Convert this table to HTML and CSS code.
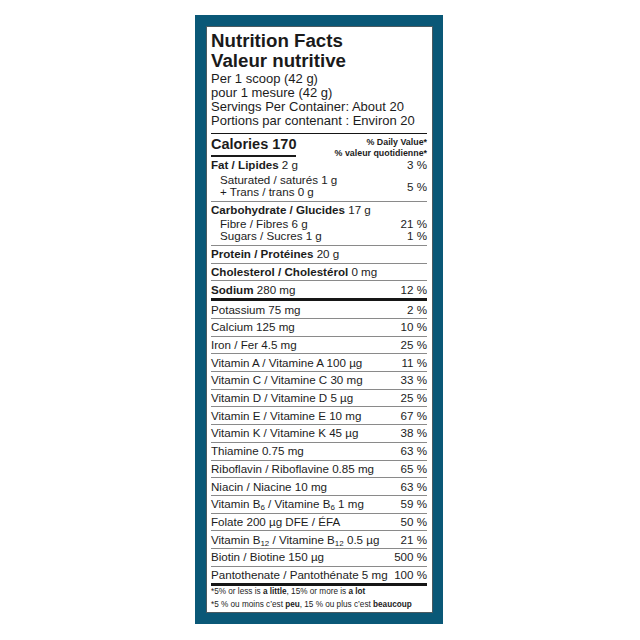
FILE: index.html
```html
<!DOCTYPE html>
<html lang="en">
<head>
<meta charset="utf-8">
<title>Nutrition Facts</title>
<link rel="stylesheet" href="styles.css">
</head>
<body>
<div class="frame">
  <div class="label">
    <h1 class="title">Nutrition Facts<br>Valeur nutritive</h1>
    <div class="serving">
      <div>Per 1 scoop (42 g)</div>
      <div>pour 1 mesure (42 g)</div>
      <div>Servings Per Container: About 20</div>
      <div>Portions par contenant : Environ 20</div>
    </div>

    <div class="cal-row">
      <div class="cal">Calories 170</div>
      <div class="dv">% Daily Value*<br>% valeur quotidienne*</div>
    </div>

    <div class="group group-fat">
      <div class="line"><span><b>Fat / Lipides</b> 2 g</span><span>3 %</span></div>
      <div class="pair">
        <div class="subs">
          <div class="line sub">Saturated / saturés 1 g</div>
          <div class="line sub">+ Trans / trans 0 g</div>
        </div>
        <span class="pct">5 %</span>
      </div>
    </div>

    <div class="group group-carb">
      <div class="line"><span><b>Carbohydrate / Glucides</b> 17 g</span></div>
      <div class="line sub first-sub"><span>Fibre / Fibres 6 g</span><span>21 %</span></div>
      <div class="line sub"><span>Sugars / Sucres 1 g</span><span>1 %</span></div>
    </div>

    <div class="row"><span><b>Protein / Protéines</b> 20 g</span></div>
    <div class="row"><span><b>Cholesterol / Cholestérol</b> 0 mg</span></div>
    <div class="row row-sodium"><span><b>Sodium</b> 280 mg</span><span>12 %</span></div>

    <div class="thick"></div>

    <div class="vitamins">
      <div class="row"><span>Potassium 75 mg</span><span>2 %</span></div>
      <div class="row"><span>Calcium 125 mg</span><span>10 %</span></div>
      <div class="row"><span>Iron / Fer 4.5 mg</span><span>25 %</span></div>
      <div class="row"><span>Vitamin A / Vitamine A 100 µg</span><span>11 %</span></div>
      <div class="row"><span>Vitamin C / Vitamine C 30 mg</span><span>33 %</span></div>
      <div class="row"><span>Vitamin D / Vitamine D 5 µg</span><span>25 %</span></div>
      <div class="row"><span>Vitamin E / Vitamine E 10 mg</span><span>67 %</span></div>
      <div class="row"><span>Vitamin K / Vitamine K 45 µg</span><span>38 %</span></div>
      <div class="row"><span>Thiamine 0.75 mg</span><span>63 %</span></div>
      <div class="row"><span>Riboflavin / Riboflavine 0.85 mg</span><span>65 %</span></div>
      <div class="row"><span>Niacin / Niacine 10 mg</span><span>63 %</span></div>
      <div class="row"><span>Vitamin B<sub>6</sub> / Vitamine B<sub>6</sub> 1 mg</span><span>59 %</span></div>
      <div class="row"><span>Folate 200 µg DFE / ÉFA</span><span>50 %</span></div>
      <div class="row"><span>Vitamin B<sub>12</sub> / Vitamine B<sub>12</sub> 0.5 µg</span><span>21 %</span></div>
      <div class="row"><span>Biotin / Biotine 150 µg</span><span>500 %</span></div>
      <div class="row"><span>Pantothenate / Pantothénate 5 mg</span><span>100 %</span></div>
    </div>

    <div class="thick"></div>

    <div class="foot">
      <div>*5% or less is <b>a little</b>, 15% or more is <b>a lot</b></div>
      <div>*5 % ou moins c’est <b>peu</b>, 15 % ou plus c’est <b>beaucoup</b></div>
    </div>
  </div>
</div>
</body>
</html>
```

FILE: styles.css
```css
* { box-sizing: border-box; }

html, body {
  margin: 0;
  padding: 0;
  background: #ffffff;
}

body {
  font-family: "Liberation Sans", Arial, sans-serif;
  color: #1c1c1c;
}

.frame {
  width: 248px;
  margin: 15px 0 0 195px;
  padding: 11px 10px 11px 11px;
  background: #0a5877;
}

.label {
  background: #ffffff;
  border: 1px solid #4b5a60;
  padding: 3.9px 5px 0.4px 4px;
}

.title {
  margin: 0;
  font-size: 18.7px;
  line-height: 20px;
  font-weight: 700;
  color: #1a1a1a;
}

.serving {
  margin-top: 1.6px;
  font-size: 13px;
  line-height: 14px;
}

.cal-row {
  display: flex;
  justify-content: space-between;
  align-items: flex-start;
  margin-top: 4.5px;
  border-top: 1px solid #151515;
}

.cal {
  font-size: 14.5px;
  font-weight: 700;
  line-height: 16px;
  padding: 2px 0 3px;
  border-bottom: 2px solid #1a1a1a;
}

.dv {
  padding-top: 3.4px;
  font-size: 8.85px;
  line-height: 10.6px;
  font-weight: 700;
  text-align: right;
}

.group {
  font-size: 11.6px;
  border-bottom: 1px solid #8a8a8a;
}

.group-fat {
  padding: 0.2px 0 2.6px;
}

.group-carb {
  padding: 1.6px 0 2.1px;
}

.line {
  display: flex;
  justify-content: space-between;
  line-height: 12.4px;
}

.sub {
  padding-left: 9px;
}

.pair {
  display: flex;
  justify-content: space-between;
  align-items: center;
  margin-top: 2.6px;
}

.first-sub {
  margin-top: 1.9px;
}

.row {
  display: flex;
  justify-content: space-between;
  align-items: center;
  height: 17.7px;
  font-size: 11.6px;
  line-height: 12px;
  border-bottom: 1px solid #8a8a8a;
  white-space: nowrap;
}

.row-sodium {
  height: 17px;
  border-bottom: 0;
}

.vitamins .row:last-child {
  height: 16.7px;
  border-bottom: 0;
}

.row sub {
  font-size: 8px;
  line-height: 0;
  vertical-align: -2px;
}

.thick {
  height: 3px;
  background: #161616;
}

.foot {
  font-size: 8.2px;
  line-height: 12.6px;
  white-space: nowrap;
}
```
